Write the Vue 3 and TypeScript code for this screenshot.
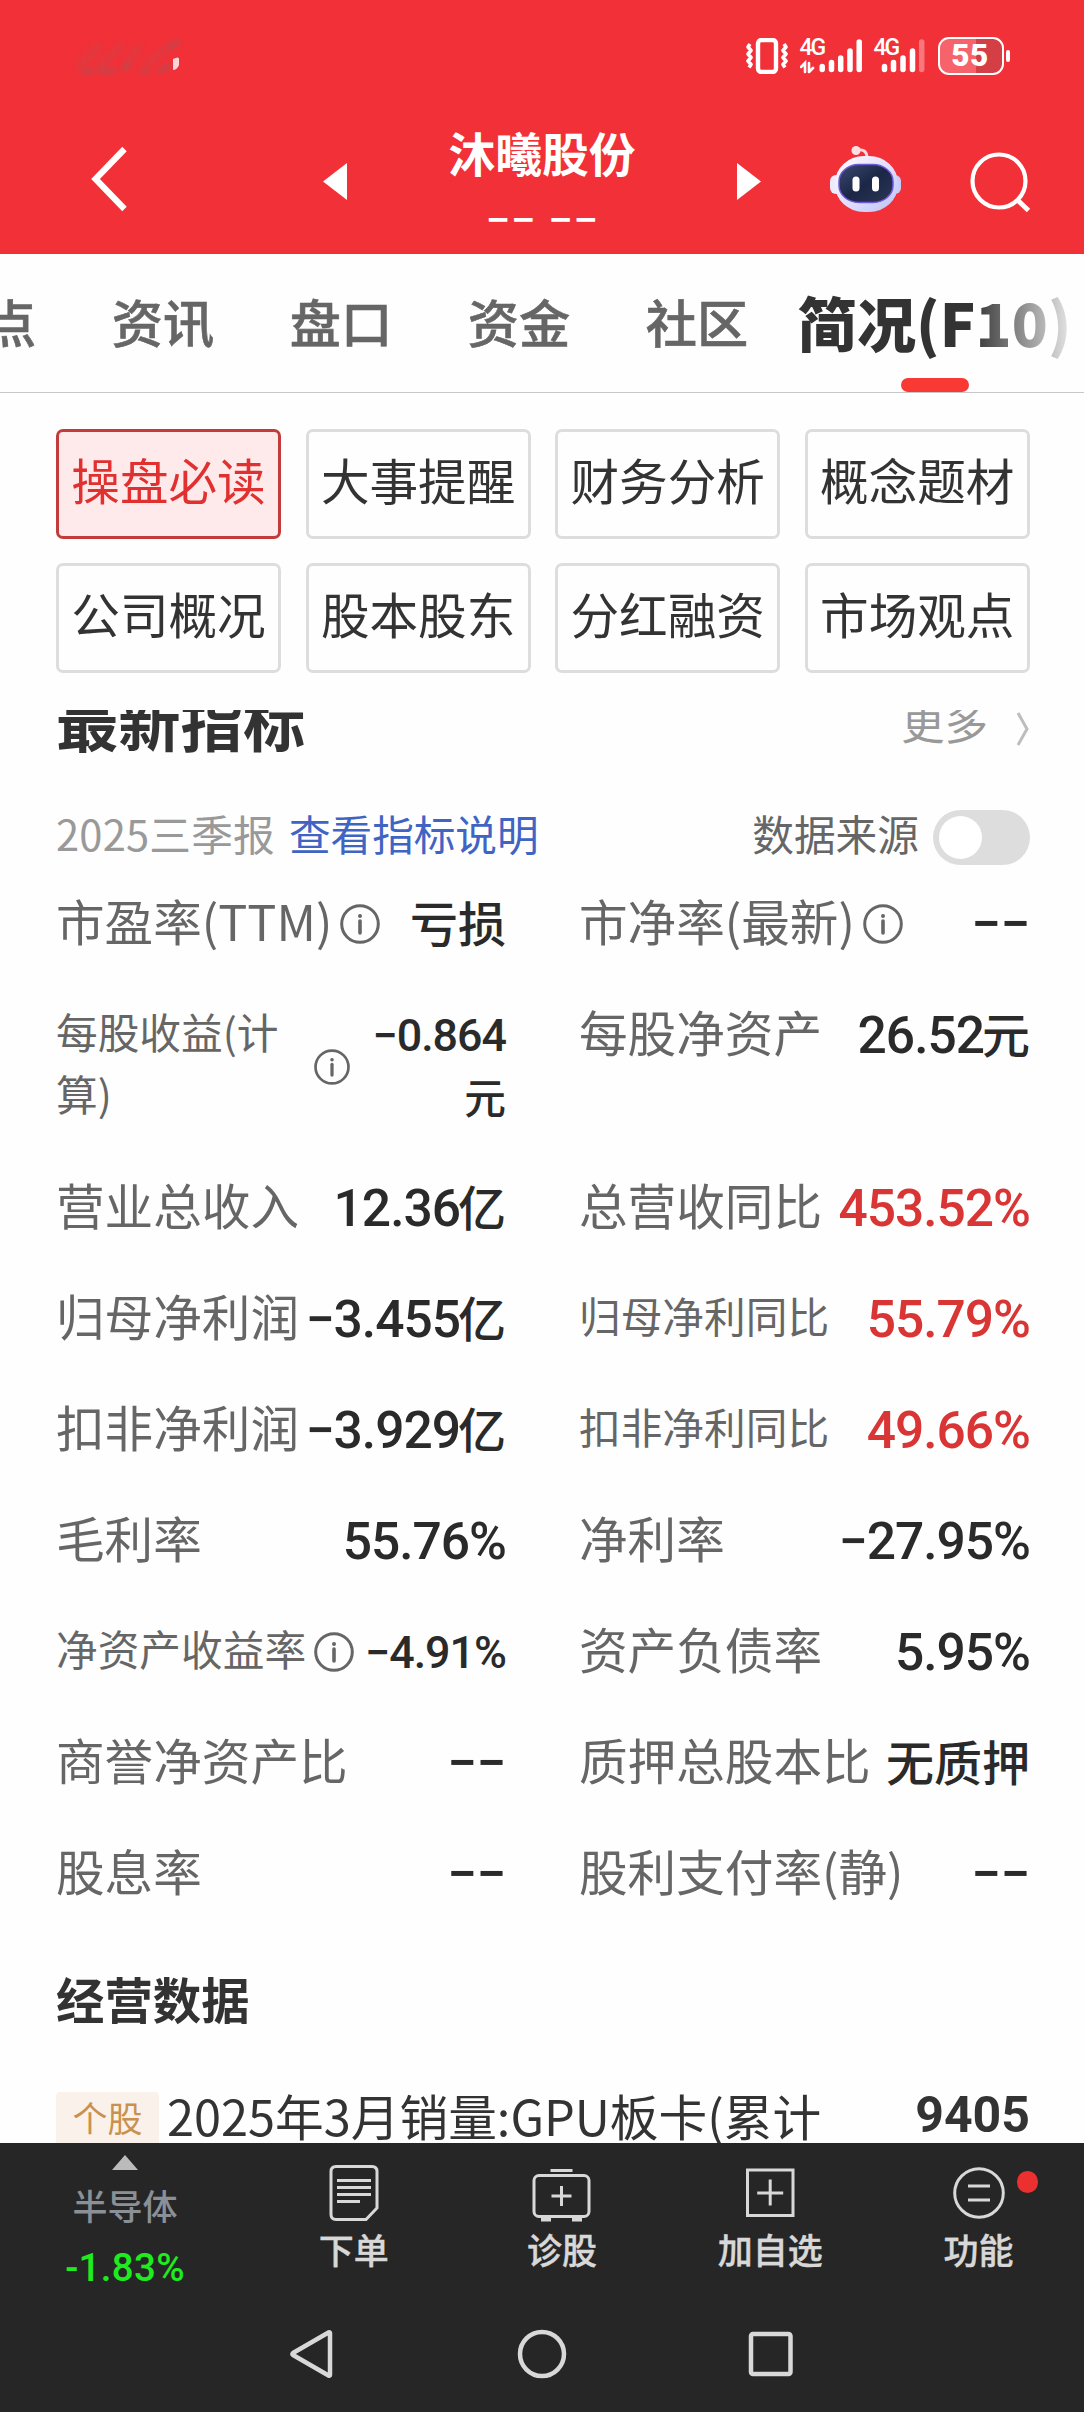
<script setup lang="ts">
interface Metric {
  label: string
  value: string
  unit?: string
  info?: boolean
  up?: boolean
  smallLabel?: boolean
  smallValue?: boolean
  wrap?: boolean
}

const EMPTY = '−−'

const tabs: string[] = ['看点', '资讯', '盘口', '资金', '社区']
const shortcuts: string[] = ['操盘必读', '大事提醒', '财务分析', '概念题材', '公司概况', '股本股东', '分红融资', '市场观点']

const metrics: Metric[] = [
  { label: '市盈率(TTM)', value: '', unit: '亏损', info: true },
  { label: '市净率(最新)', value: EMPTY, info: true },
  { label: '每股收益(计算)', value: '−0.864', unit: '元', info: true, smallLabel: true, smallValue: true, wrap: true },
  { label: '每股净资产', value: '26.52', unit: '元' },
  { label: '营业总收入', value: '12.36', unit: '亿' },
  { label: '总营收同比', value: '453.52%', up: true },
  { label: '归母净利润', value: '−3.455', unit: '亿' },
  { label: '归母净利同比', value: '55.79%', up: true, smallLabel: true },
  { label: '扣非净利润', value: '−3.929', unit: '亿' },
  { label: '扣非净利同比', value: '49.66%', up: true, smallLabel: true },
  { label: '毛利率', value: '55.76%' },
  { label: '净利率', value: '−27.95%' },
  { label: '净资产收益率', value: '−4.91%', info: true, smallLabel: true, smallValue: true },
  { label: '资产负债率', value: '5.95%' },
  { label: '商誉净资产比', value: EMPTY },
  { label: '质押总股本比', value: '', unit: '无质押' },
  { label: '股息率', value: EMPTY },
  { label: '股利支付率(静)', value: EMPTY },
]
</script>

<template>
  <div class="screen">
    <header class="header">
      <div class="status">
        <svg class="smudge" width="124" height="46" viewBox="0 0 124 46">
          <g class="smear" fill="none" stroke-linecap="round">
            <path d="M16 30L34 12M36 32L56 12M62 30L74 14M84 28L104 12" stroke="#e2383f" stroke-width="9" />
            <path d="M20 36h8M36 36h14M60 34l4-4M78 36h6M96 36l10-6M106 12l8-5" stroke="#bb4a50" stroke-width="4" />
          </g>
          <path d="M109 24q6-3 6 0v6q-2 5-6 5z" fill="#fbd5d7" />
        </svg>
        <div class="status-icons">
          <svg width="42" height="36" viewBox="0 0 42 36" fill="none" stroke="#fff">
            <rect x="12" y="2" width="18" height="32" rx="3.500" stroke-width="4.400" />
            <path d="M4 6l-2 3 3 3.500-3 3.500 3 3.500-3 3.500 3 3.500-2 3M38 6l2 3-3 3.500 3 3.500-3 3.500 3 3.500-3 3.500 2 3" stroke-width="3.600" stroke-linejoin="round" />
          </svg>
          <div class="signal">
            <span class="net">4G</span>
            <svg width="62" height="36" viewBox="0 0 62 36" stroke="#fff" stroke-width="5.500" stroke-linecap="round">
              <path d="M22.200 28.500V31.500M31.500 24.500V31.500M40.700 20V31.500M50 13V31.500M59.200 4V31.500" />
              <path d="M1 29l4-4v9M9 34v-9M9 34l4-4" stroke-width="2.600" fill="none" />
            </svg>
          </div>
          <div class="signal">
            <span class="net">4G</span>
            <svg width="52" height="36" viewBox="0 0 52 36" stroke="#fff" stroke-width="5.500" stroke-linecap="round">
              <path d="M10.500 28.500V31.500M19.500 24.500V31.500M29 20V31.500M38.500 13V31.500" />
              <path d="M47.700 4V31.500" opacity=".35" />
            </svg>
          </div>
          <div class="battery"><span>55</span></div>
          <i class="nub"></i>
        </div>
      </div>
      <div class="nav">
        <svg class="back" width="40" height="66" viewBox="0 0 40 66" fill="none" stroke="#fff" stroke-width="6.200"><path d="M36.500 3L7.500 33l29 30" /></svg>
        <svg class="prev" width="24" height="37" viewBox="0 0 24 37" fill="#fff"><path d="M24 0v37L0 18.500z" /></svg>
        <div class="title">
          <h1>沐曦股份</h1>
          <p>−− −−</p>
        </div>
        <svg class="next" width="24" height="37" viewBox="0 0 24 37" fill="#fff"><path d="M0 0v37L24 18.500z" /></svg>
        <svg class="robot" width="74" height="68" viewBox="0 0 74 68">
          <defs>
            <linearGradient id="shell" x1="0" y1="0" x2="1" y2="1"><stop offset="0" stop-color="#fff" /><stop offset=".6" stop-color="#dcd9fb" /><stop offset="1" stop-color="#b9c3f8" /></linearGradient>
            <linearGradient id="glass" x1="0" y1="0" x2="1" y2="1"><stop offset="0" stop-color="#3b4a70" /><stop offset=".5" stop-color="#1c2747" /><stop offset="1" stop-color="#2b3654" /></linearGradient>
          </defs>
          <path d="M27 5q11-2 11 8" fill="none" stroke="#fbd6dc" stroke-width="3" />
          <circle cx="27" cy="5.500" r="4.500" fill="#fbdfe6" />
          <rect x="1" y="30" width="12" height="19" rx="6" fill="#eeeafd" />
          <rect x="60" y="30" width="12" height="19" rx="6" fill="#c9cbfa" />
          <rect x="6" y="11" width="63" height="56" rx="29" ry="27" fill="url(#shell)" />
          <rect x="10" y="19.500" width="54" height="38" rx="20" ry="17" fill="url(#glass)" stroke="#6d58d8" stroke-width="1.500" />
          <rect x="23.500" y="31.500" width="7" height="15" rx="3.500" fill="#fff" />
          <rect x="43" y="31.500" width="7" height="15" rx="3.500" fill="#fff" />
        </svg>
        <svg class="search" width="62" height="62" viewBox="0 0 62 62" fill="none" stroke="#fff" stroke-width="4.200"><circle cx="29" cy="30" r="26.500" /><path d="M47.500 49l11 10.500" stroke-width="4.800" /></svg>
      </div>
    </header>

    <nav class="tabs">
      <span v-for="t in tabs" :key="t" class="tab">{{ t }}</span>
      <span class="tab active">简况(F10)</span>
      <i class="fade"></i>
    </nav>

    <section class="shortcuts">
      <button v-for="(s, i) in shortcuts" :key="s" :class="{ on: i === 0 }">{{ s }}</button>
    </section>

    <main class="content">
      <div class="section-head">
        <h2>最新指标</h2>
        <span class="more">更多</span>
        <svg width="14" height="36" viewBox="0 0 14 36" fill="none" stroke="#bdbdbd" stroke-width="3"><path d="M2 2l9 16-9 16" /></svg>
      </div>
      <div class="report">
        <span class="period">2025三季报</span>
        <a>查看指标说明</a>
        <span class="source">数据来源</span>
        <i class="switch"></i>
      </div>
      <div class="metrics">
        <div v-for="m in metrics" :key="m.label" class="metric" :class="{ wrap: m.wrap }">
          <span class="label" :class="{ small: m.smallLabel }">{{ m.label }}</span>
          <svg v-if="m.info" class="info" viewBox="0 0 40 40" fill="none" stroke="#666"><circle cx="20" cy="20" r="18.300" stroke-width="3" /><path d="M20 17v12" stroke-width="3.600" stroke-linecap="round" /><circle cx="20" cy="12" r="2" fill="#666" stroke="none" /></svg>
          <span class="value" :class="{ up: m.up, small: m.smallValue, empty: m.value === EMPTY }"><span v-if="m.value" class="num">{{ m.value }}</span><span v-if="m.unit" class="unit">{{ m.unit }}</span></span>
        </div>
      </div>
      <h3>经营数据</h3>
      <div class="business">
        <span class="tag">个股</span>
        <span class="name">2025年3月销量:GPU板卡(累计</span>
        <span class="count">9405</span>
      </div>
    </main>

    <footer class="footer">
      <div class="actions">
        <div class="sector">
          <svg width="26" height="15" viewBox="0 0 26 15" fill="#bbb"><path d="M13 0l13 15H0z" /></svg>
          <span>半导体</span>
          <b>-1.83%</b>
        </div>
        <div class="action">
          <svg width="60" height="60" viewBox="0 0 60 60" fill="none" stroke="#d8d8d8" stroke-width="3"><path d="M12 4.500H48Q53 4.500 53 9.500V46L42 57.500H12Q7 57.500 7 52.500V9.500Q7 4.500 12 4.500Z" /><path d="M13 18.500H47M13 25.500H47M13 32.500H47M13 39.500H36" /></svg>
          <span>下单</span>
        </div>
        <div class="action">
          <svg width="60" height="60" viewBox="0 0 60 60" fill="none" stroke="#d8d8d8" stroke-width="3"><rect x="2" y="13.500" width="55" height="41" rx="5" /><path d="M18.500 8.500H40.500M29.500 24v20M19.500 34h20" /><path d="M9 57.500h10M40 57.500h10" stroke-width="4" /></svg>
          <span>诊股</span>
        </div>
        <div class="action">
          <svg width="60" height="60" viewBox="0 0 60 60" fill="none" stroke="#d8d8d8" stroke-width="3"><rect x="6.500" y="8" width="45.500" height="45.500" /><path d="M29.200 17.500v26M16.200 31h26" /></svg>
          <span>加自选</span>
        </div>
        <div class="action">
          <svg width="60" height="60" viewBox="0 0 60 60" fill="none" stroke="#d8d8d8" stroke-width="3"><circle cx="30" cy="31" r="24.300" /><path d="M19 24h22M19 38h22" /></svg>
          <span>功能</span>
          <i class="dot"></i>
        </div>
      </div>
      <div class="system">
        <svg width="50" height="50" viewBox="0 0 50 50"><path d="M42 4V46Q42 47 40.500 46.500L5 26Q4 25 5 24L40.500 3.500Q42 3 42 4Z" /></svg>
        <svg width="50" height="50" viewBox="0 0 50 50"><circle cx="25" cy="25" r="22" /></svg>
        <svg width="50" height="50" viewBox="0 0 50 50"><rect x="5" y="5" width="39.500" height="40" rx="2" /></svg>
      </div>
    </footer>
  </div>
</template>

<style>
body { margin: 0; background: #fff; }
</style>

<style scoped>
.screen {
  width: 1084px;
  height: 2412px;
  display: flex;
  flex-direction: column;
  overflow: hidden;
  background: #fefefe;
  color: #333;
  font-family: "Noto Sans CJK SC", sans-serif;
}
svg { display: block; flex: none; }
h1, h2, h3, p { margin: 0; }
i { font-style: normal; }

.header { height: 254px; flex: none; background: #f23038; color: #fff; }
.status { height: 112px; display: flex; justify-content: space-between; }
.smudge { margin: 35px 0 0 64px; }
.smear { filter: blur(2.500px); }
.status-icons { display: flex; padding: 38px 74px 0 0; height: 37px; }
.signal { position: relative; margin-left: 12px; }
.net { position: absolute; left: 0; top: -1px; font: 500 23px/22px Roboto, sans-serif; letter-spacing: -2px; }
.battery {
  box-sizing: border-box; width: 66px; height: 38px; margin: -1px 0 0 12px; border: 2.500px solid #fff; border-radius: 11px;
  background: linear-gradient(90deg, #f6636a 0 58%, #d43e45 58%); text-align: center;
  font: 900 31.500px/34px Roboto, sans-serif; letter-spacing: .5px; text-indent: -1px;
}
.nub { width: 4.500px; height: 12px; margin: 12px 0 0 2px; border-radius: 2px; background: #fff; }
.nav { height: 142px; display: flex; align-items: flex-start; }
.back { margin: 34px 0 0 88px; }
.prev { margin: 51px 0 0 195px; }
.title { width: 214px; margin-left: 88px; text-align: center; white-space: nowrap; }
.title h1 { font-size: 46.800px; line-height: 60px; margin-top: 10px; font-weight: 700; }
.title p { font-size: 36px; line-height: 40px; margin-top: 15px; font-weight: 700; letter-spacing: 4px; text-indent: 4px; }
.next { margin: 51px 0 0 88px; }
.robot { margin: 33px 0 0 68px; }
.search { margin: 39px 0 0 67px; }

.tabs { height: 138px; flex: none; display: flex; position: relative; border-bottom: 1px solid #c8c8c8; overflow: hidden; margin-bottom: 36px; }
.tab { width: 178px; flex: none; text-align: center; font-size: 51.200px; line-height: 134px; font-weight: 500; color: #666; white-space: nowrap; -webkit-text-stroke: .6px #666; }
.tab:first-child { margin-left: -104px; }
.tab.active { position: relative; width: 296px; font-size: 59.300px; font-weight: 900; color: #333; -webkit-text-stroke: 0; text-indent: 1px; }
.tab.active::after { content: ""; position: absolute; left: 115px; bottom: 0; width: 68px; height: 14px; border-radius: 7px; background: #f93a34; }
.fade { position: absolute; right: 0; top: 20px; width: 112px; height: 100px; background: linear-gradient(90deg, rgba(254,254,254,0), #fefefe); }

.shortcuts { display: grid; grid-template-columns: repeat(4, 225px); grid-auto-rows: 110px; gap: 24px 24.600px; padding: 0 56px; flex: none; height: 281px; box-sizing: border-box; }
.shortcuts button { border: 3px solid #ddd; border-radius: 7px; background: #fefefe; color: #333; font: 400 48.600px/94px "Noto Sans CJK SC", sans-serif; padding: 0 0 10px; margin: 0; white-space: nowrap; }
.shortcuts button.on { border-color: #c23c3c; background: #feeaea; color: #e03030; }

.content { flex: 1; min-height: 0; overflow: hidden; padding: 0 54px 0 56px; }
.section-head { display: flex; align-items: flex-start; height: 95px; margin-top: -1px; }
.section-head h2 { flex: 1; font-size: 62.300px; line-height: 62px; font-weight: 700; margin-top: -20px; }
.more { color: #999; font-size: 43.500px; line-height: 42px; margin: -8px 28px 0 0; }
.section-head svg { margin-top: 2px; }
.report { display: flex; align-items: flex-start; height: 62px; font-size: 41.700px; line-height: 59px; }
.period { color: #999; letter-spacing: .2px; }
.report a { color: #4064c4; margin-left: 14px; flex: 1; letter-spacing: -.1px; }
.source { color: #666; }
.switch { width: 97px; height: 55px; border-radius: 28px; background: #ddd; margin: 6px 0 0 14px; box-sizing: border-box; padding: 6px; display: flex; }
.switch::before { content: ""; width: 43px; height: 43px; border-radius: 50%; background: #fff; }
.metrics { display: grid; grid-template-columns: 450px 451px; column-gap: 73px; grid-auto-rows: 111px; grid-template-rows: 111px 173px; }
.metric { display: flex; align-items: flex-start; white-space: nowrap; line-height: 109px; }
.label { color: #666; font-size: 48.600px; }
.label.small { font-size: 41.700px; }
.value { margin-left: auto; color: #2a2a2a; font-weight: 500; text-align: right; font-size: 48px; line-height: 110px; }
.num { font-family: Roboto, sans-serif; font-size: 51.500px; letter-spacing: -1px; }
.num + .unit { margin-left: -2px; }
.unit { font-size: 48px; }
.empty .num { font-size: 53px; letter-spacing: -.4px; }
.small .num { font-size: 44.800px; }
.value.small, .small .unit { font-size: 41.700px; }
.value.small { line-height: 112px; }
.value.up { color: #d93535; }
.info { width: 40px; height: 40px; margin: 38px 0 0 8px; }
.metric.wrap { white-space: normal; line-height: 62px; padding-top: 23px; }
.wrap .label { width: 248px; word-break: break-all; }
.metric.wrap .value { width: 140px; line-height: 61px; padding-top: 3px; }
.wrap .info { width: 36px; height: 36px; margin: 49px 0 0 10px; }
.content h3 { font-size: 48.400px; line-height: 70px; font-weight: 700; margin-top: 36px; }
.business { display: flex; align-items: flex-start; margin-top: 48px; white-space: nowrap; }
.tag { width: 103px; height: 70px; margin-top: 11px; background: #faf1eb; border-radius: 4px; color: #c9914f; font-size: 35px; line-height: 50px; text-align: center; }
.name { margin-left: 8px; font-size: 48.700px; line-height: 68px; }
.count { margin-left: auto; font: 700 50px/69px Roboto, sans-serif; }

.footer { height: 269px; flex: none; background: #262626; color: #d8d8d8; }
.actions { display: flex; height: 163px; }
.sector { width: 250px; display: flex; flex-direction: column; align-items: center; padding-top: 12px; }
.sector span { font-size: 35px; line-height: 50px; color: #8a9096; font-weight: 500; margin-top: 10px; }
.sector b { font: 500 38.500px/44px Roboto, sans-serif; color: #1fec1f; margin-top: 16px; letter-spacing: .3px; }
.action { width: 208.300px; display: flex; flex-direction: column; align-items: center; position: relative; padding-top: 19px; }
.action span { font-size: 35px; line-height: 50px; font-weight: 500; margin: 2px 1px 0 0; -webkit-text-stroke: .4px #d8d8d8; }
.dot { position: absolute; left: 142px; top: 28px; width: 21.500px; height: 21.500px; border-radius: 50%; background: #ec3030; }
.system { height: 106px; display: flex; justify-content: center; gap: 179px; padding-top: 23px; box-sizing: border-box; }
.system svg { fill: none; stroke: #d8d8d8; stroke-width: 4.500px; stroke-linejoin: round; }
</style>
